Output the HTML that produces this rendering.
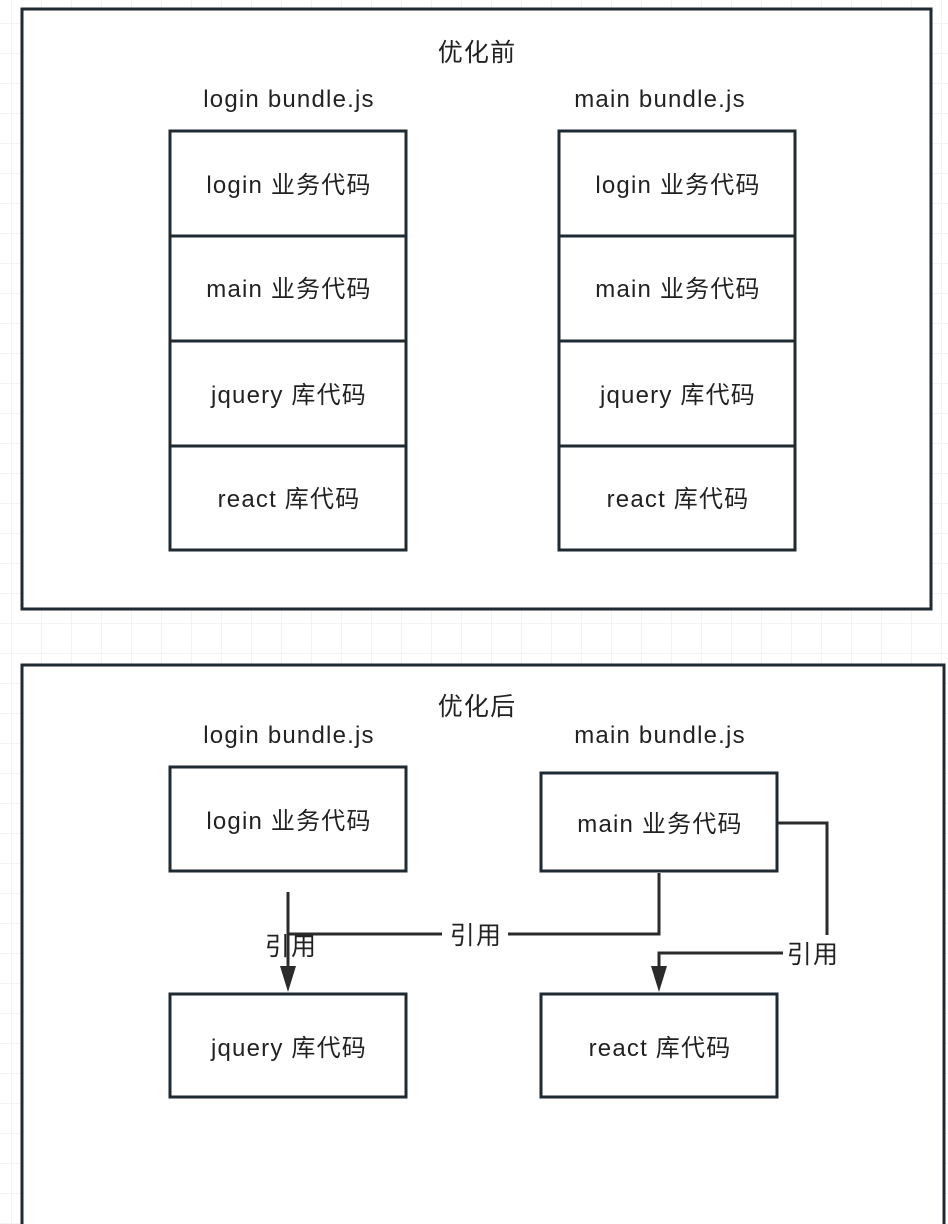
<!DOCTYPE html>
<html><head><meta charset="utf-8"><style>
html,body{margin:0;padding:0;background:#fff;}
svg{display:block;}
text{font-family:"Liberation Sans","Noto Sans CJK SC",sans-serif;fill:#222;}
</style></head><body>
<svg width="948" height="1224" viewBox="0 0 948 1224" xmlns="http://www.w3.org/2000/svg">
<defs>
<pattern id="g" x="11" y="23" width="30" height="30" patternUnits="userSpaceOnUse">
<path d="M0 0H30M0 0V30" stroke="#efefef" stroke-width="1.5" fill="none"/>
</pattern>
</defs>
<rect width="948" height="1224" fill="url(#g)"/>
<g stroke="#1f2a33" stroke-width="3" fill="#fff">
<rect x="22" y="9" width="909" height="600"/>
<rect x="22" y="665" width="922" height="600"/>
<rect x="170" y="131" width="236" height="105"/>
<rect x="170" y="236" width="236" height="105"/>
<rect x="170" y="341" width="236" height="105"/>
<rect x="170" y="446" width="236" height="104"/>
<rect x="559" y="131" width="236" height="105"/>
<rect x="559" y="236" width="236" height="105"/>
<rect x="559" y="341" width="236" height="105"/>
<rect x="559" y="446" width="236" height="104"/>
<rect x="170" y="767" width="236" height="104"/>
<rect x="541" y="773" width="236" height="98"/>
<rect x="170" y="994" width="236" height="103"/>
<rect x="541" y="994" width="236" height="103"/>
</g>
<g stroke="#2b2b2b" stroke-width="3" fill="none">
<path d="M288 892V966"/>
<path d="M659 873V934H288"/>
<path d="M778 823H827V935"/>
<path d="M785 953H659V966"/>
</g>
<g fill="#2b2b2b">
<path d="M280 966H296L288 992Z"/>
<path d="M651 966H667L659 992Z"/>
</g>
<rect x="442" y="918" width="66" height="30" fill="#fff"/>
<rect x="783" y="937" width="58" height="32" fill="#fff"/>
<g font-size="24" letter-spacing="1.2" text-anchor="middle">
<text x="477" y="61" font-size="25">优化前</text>
<text x="289" y="107">login bundle.js</text>
<text x="660" y="107">main bundle.js</text>
<text x="289" y="193">login 业务代码</text>
<text x="289" y="297">main 业务代码</text>
<text x="289" y="403">jquery 库代码</text>
<text x="289" y="507">react 库代码</text>
<text x="678" y="193">login 业务代码</text>
<text x="678" y="297">main 业务代码</text>
<text x="678" y="403">jquery 库代码</text>
<text x="678" y="507">react 库代码</text>
<text x="477" y="715" font-size="25">优化后</text>
<text x="289" y="743">login bundle.js</text>
<text x="660" y="743">main bundle.js</text>
<text x="289" y="829">login 业务代码</text>
<text x="660" y="832">main 业务代码</text>
<text x="289" y="1056">jquery 库代码</text>
<text x="660" y="1056">react 库代码</text>
<text x="476" y="944" font-size="25">引用</text>
<text x="291" y="955" font-size="25">引用</text>
<text x="813" y="963" font-size="25">引用</text>
</g>
</svg>
</body></html>
